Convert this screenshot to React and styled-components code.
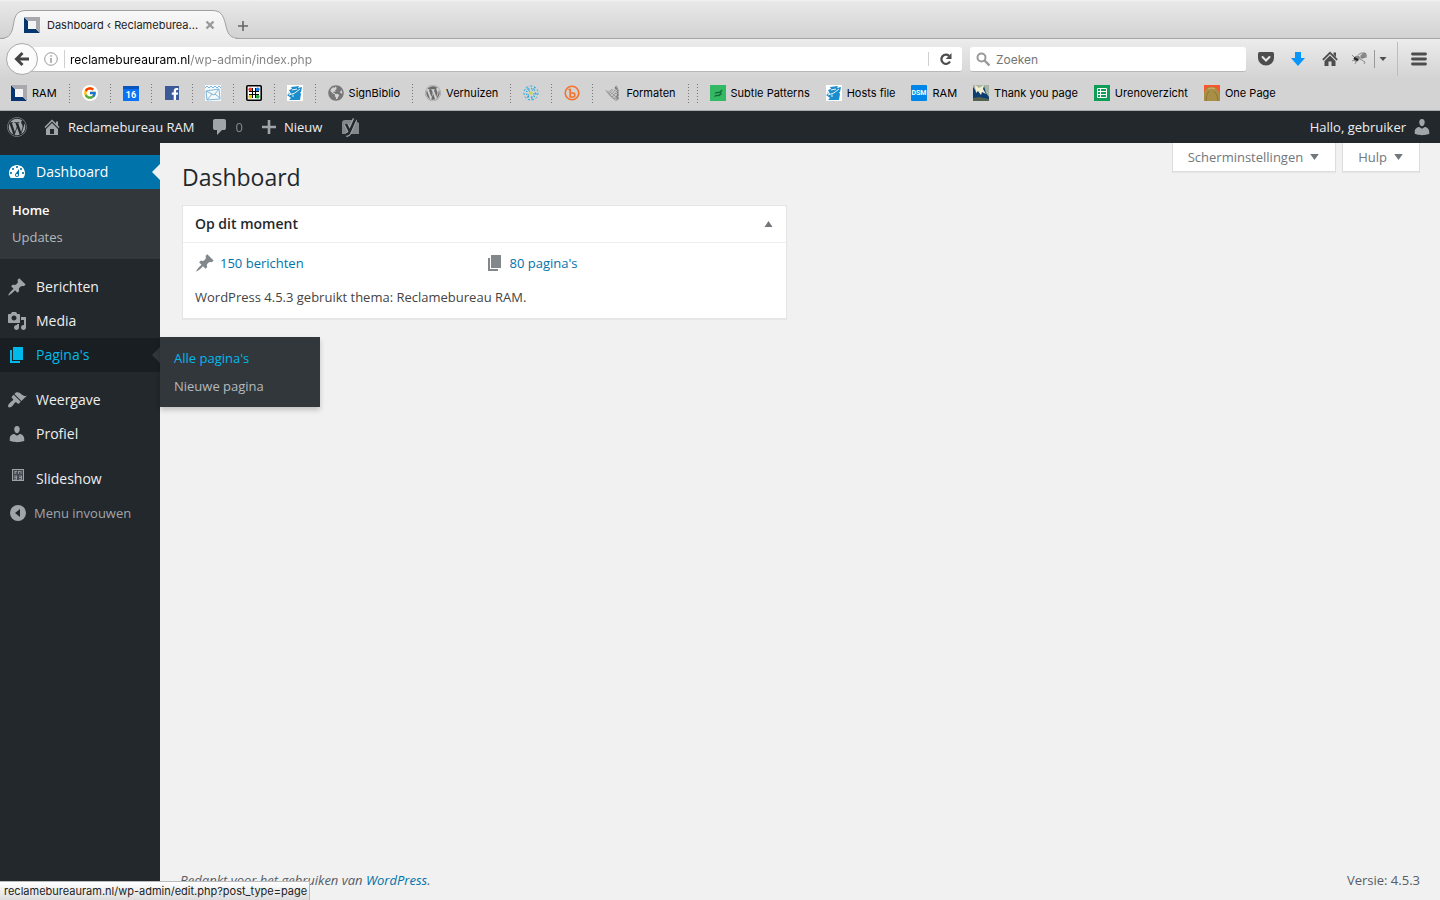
import React from "react";
import styled, { createGlobalStyle, css } from "styled-components";
import { FaFacebookF, FaGlobeAmericas, FaWordpress } from "react-icons/fa";
import { FcGoogle } from "react-icons/fc";

const GlobalStyle = createGlobalStyle`
  *, *::before, *::after {
    box-sizing: border-box;
  }

  body {
    margin: 0;
    background: #f1f1f1;
    font-family: "Open Sans", sans-serif;
    font-size: 13px;
    color: #444;
  }

  a {
    text-decoration: none;
  }

  button, input {
    font: inherit;
    color: inherit;
    border: 0;
    padding: 0;
    margin: 0;
    background: none;
  }

  ul {
    list-style: none;
    margin: 0;
    padding: 0;
  }

  svg {
    display: block;
    flex: none;
  }
`;

const Page = styled.div`
  min-height: 100vh;
  display: flex;
  flex-direction: column;
`;

/* ---------- icons ---------- */

const DASHICONS = {
  dashboard:
    "M3.76 16h12.48c1.1-1.37 1.76-3.11 1.76-5 0-4.42-3.58-8-8-8s-8 3.58-8 8c0 1.89.66 3.63 1.76 5zM10 4c.55 0 1 .45 1 1s-.45 1-1 1-1-.45-1-1 .45-1 1-1zM6 6c.55 0 1 .45 1 1s-.45 1-1 1-1-.45-1-1 .45-1 1-1zm8 0c.55 0 1 .45 1 1s-.45 1-1 1-1-.45-1-1 .45-1 1-1zm-5.37 5.55L12 7v6c0 1.1-.9 2-2 2s-2-.9-2-2c0-.57.24-1.08.63-1.45zM4 10c.55 0 1 .45 1 1s-.45 1-1 1-1-.45-1-1 .45-1 1-1zm12 0c.55 0 1 .45 1 1s-.45 1-1 1-1-.45-1-1 .45-1 1-1zm-5 3c0-.55-.45-1-1-1s-1 .45-1 1 .45 1 1 1 1-.45 1-1z",
  post:
    "M10.44 3.02l1.82-1.82 6.36 6.35-1.83 1.82c-1.05-.68-2.48-.57-3.41.36l-.75.75c-.92.93-1.04 2.35-.35 3.41l-1.83 1.82-2.41-2.41-2.8 2.79c-.42.42-3.38 2.71-3.8 2.29s1.86-3.39 2.28-3.81l2.79-2.79L4.1 9.36l1.83-1.82c1.05.69 2.48.57 3.4-.36l.75-.75c.93-.92 1.05-2.35.36-3.41z",
  media:
    "M13 11V4c0-.55-.45-1-1-1h-1.67L9 1H5L3.67 3H2c-.55 0-1 .45-1 1v7c0 .55.45 1 1 1h10c.55 0 1-.45 1-1zM7 4.5c1.38 0 2.5 1.12 2.5 2.5S8.38 9.5 7 9.5 4.5 8.38 4.5 7 5.62 4.5 7 4.5zM14 6h5v10.5c0 1.38-1.12 2.5-2.5 2.5S14 17.88 14 16.5s1.12-2.5 2.5-2.5c.17 0 .34.02.5.05V9h-3V6zm-4 8.05V13h2v3.5c0 1.38-1.12 2.5-2.5 2.5S7 17.88 7 16.5 8.12 14 9.5 14c.17 0 .34.02.5.05z",
  page: "M6 15V2h10v13H6zm-1 1h8v2H3V5h2v11z",
  appearance:
    "M14.48 11.06L7.41 3.99l1.5-1.5c.5-.56 2.3-.47 3.51.32 1.21.8 1.43 1.28 2.91 2.1 1.18.64 2.45 1.26 4.45.85zm-.71.71L6.7 4.7 4.93 6.47c-.39.39-.39 1.02 0 1.41l1.06 1.06c.39.39.39 1.03 0 1.42-.6.6-1.43 1.11-2.21 1.69-.35.26-.7.53-1.01.84C1.43 14.23.4 16.08 1.4 17.07c.99 1 2.84-.03 4.18-1.36.31-.31.58-.66.85-1.02.57-.78 1.08-1.61 1.69-2.21.39-.39 1.02-.39 1.41 0l1.06 1.06c.39.39 1.02.39 1.41 0z",
  users:
    "M10 9.25c-2.27 0-2.73-3.44-2.73-3.44C7 4.02 7.82 2 9.97 2c2.16 0 2.98 2.02 2.71 3.81 0 0-.41 3.44-2.68 3.44zm0 2.57L12.72 10c2.39 0 4.52 2.33 4.52 4.53v2.49s-3.65 1.13-7.24 1.13c-3.65 0-7.24-1.13-7.24-1.13v-2.49c0-2.25 1.94-4.48 4.47-4.48z",
  home:
    "M16 8.5l1.53 1.53-1.06 1.06L10 4.6l-6.47 6.49-1.06-1.06L10 2.5l4 4v-2h2v4zm-6-2.46l6 5.99V18H4v-5.97zM12 17v-5H8v5h4z",
  comments:
    "M5 2h9q.82 0 1.41.59T16 4v7q0 .82-.59 1.41T14 13h-2l-5 5v-5H5q-.82 0-1.41-.59T3 11V4q0-.82.59-1.41T5 2z",
  plus: "M17 8.7v2.6h-5.700v5.700H8.700v-5.700H3V8.700h5.700V3h2.600v5.700z",
  collapse: "M10 2a8 8 0 1 0 0 16a8 8 0 0 0 0-16zM12 6v8l-5-4z",
};

const Dashicon = ({ name }) => (
  <svg width="20" height="20" viewBox="0 0 20 20" fill="currentColor" aria-hidden="true">
    <path d={DASHICONS[name]} fillRule={name === "collapse" ? "evenodd" : "nonzero"} />
  </svg>
);

const Glyph = ({ size = 16, children }) => (
  <svg width={size} height={size} viewBox={`0 0 ${size} ${size}`} fill="none" aria-hidden="true">
    {children}
  </svg>
);

const Triangle = ({ up }) => (
  <svg width="9" height="6" viewBox="0 0 9 6" fill="currentColor" aria-hidden="true">
    <path d={up ? "M4.500 0L8.500 6H.5z" : "M.2 0h8.600L4.500 6z"} />
  </svg>
);

const SlideshowIcon = () => (
  <Glyph size={12}>
    <rect x=".5" y=".5" width="11" height="11" fill="#444950" stroke="#9ea3a8" />
    <path
      d="M3 2v3M3 2.500h2M3 4h1.500M6.500 2v3M9 2v3M6.500 2.500h2M2 7h3M2 8.500h3M2 10.300h3M4.500 7v3.500M7 7h3M7 8.500h3M7 10.300h3M9.500 7v3.500"
      stroke="#9ea3a8"
      strokeWidth=".8"
    />
  </Glyph>
);

const YoastIcon = () => (
  <Glyph size={20}>
    <path d="M5 3h9l5 3v11H2V6q0-3 3-3z" fill="#82878c" />
    <path d="M6 7l3.500 7M15 2l-5.500 13Q8.500 17.500 6 17.500" stroke="#a0a5aa" strokeWidth="4.600" />
    <path d="M6 7l3.500 7M15.500 1.500l-6 13.500Q8.500 17.500 6 17.500" stroke="#23282d" strokeWidth="2.400" />
  </Glyph>
);

const RamIcon = () => (
  <Glyph>
    <path d="M0 0h16v16H0z" fill="#fff" />
    <path d="M0 0l4 4v8h8l4 4H0z" fill="#06366f" />
    <path d="M0 0h16v16l-4-4V4H4z" fill="#a7a9ae" />
    <path d="M4 4h8v8H4z" fill="#f4f4f4" />
  </Glyph>
);

const GoogleIcon = () => (
  <Glyph>
    <circle cx="8" cy="8" r="8" fill="#fff" />
    <FcGoogle x="1" y="1" size={14} />
  </Glyph>
);

const CalendarIcon = () => (
  <Glyph>
    <path d="M0 1h16v15H0z" fill="#0a72f4" />
    <path d="M0 1h16v3H0z" fill="#0a55bd" />
    <text x="8" y="13" textAnchor="middle" fontFamily="Roboto, sans-serif" fontSize="9" fontWeight="700" fill="#fff">
      16
    </text>
  </Glyph>
);

const FacebookIcon = () => (
  <Glyph>
    <path d="M1 1h14v14H1z" fill="#3b5998" />
    <FaFacebookF x="5" y="3" size={12} color="#fff" />
  </Glyph>
);

const MailIcon = () => (
  <Glyph>
    <path d="M0 0h16v16H0z" fill="#f3f8fb" />
    <path d="M1 6l13-2 1 10-13 1zM1 6l8 4 5-6M2 15l5-6M15 13l-5-4" stroke="#7db6d9" />
    <path d="M0 3l2-2 2 2 2-2 2 2 2-2 2 2 2-2 2 2" stroke="#7db6d9" />
  </Glyph>
);

const GridIcon = () => (
  <Glyph>
    <rect x=".8" y=".8" width="14.400" height="14.400" rx="1" fill="#fff" stroke="#000" strokeWidth="1.600" />
    <path d="M6.500 3v10M9.500 3v10M3 6.500h10M3 9.500h10" stroke="#000" />
    <circle cx="4.300" cy="4.300" r="1.900" fill="#ef3e23" />
    <circle cx="11.700" cy="4.300" r="1.900" fill="#1676e8" />
    <circle cx="4.300" cy="11.700" r="1.900" fill="#e8cc12" />
    <circle cx="11.700" cy="11.700" r="1.900" fill="#18b23b" />
  </Glyph>
);

const HostsIcon = () => (
  <Glyph>
    <path d="M0 0h16v16H0z" fill="#fff" />
    <path d="M4 2l8-1-1 2 4-1-1 5-10 2-2-4 3-1zM1 7l2 2 10-2 1 2-1 6H2l2-2-4-3 2-1z" fill="#1c8dcc" />
    <path d="M2 10q6-1 11-6M6 9.500V12M5 5l5-1" stroke="#fff" strokeWidth=".9" />
  </Glyph>
);

const SparkIcon = () => (
  <Glyph>
    <circle cx="8" cy="8" r="7" stroke="#21a5dc" strokeDasharray="2 2" />
    <circle cx="8" cy="8" r="4.500" stroke="#21a5dc" strokeDasharray="1 2" strokeWidth="1.500" />
    <path d="M3 2l4 5M12 2l-3 4M14 9h-4M4 13l2-4M9 15v-4" stroke="#21a5dc" strokeWidth=".8" />
    <circle cx="8" cy="8" r="1.500" fill="#c9d92c" />
  </Glyph>
);

const BitlyIcon = () => (
  <Glyph>
    <circle cx="8" cy="8" r="6.800" stroke="#f3722c" strokeWidth="1.600" />
    <path d="M4.500 4.500h1.700v8M6.200 8h3.300a1.200 1.200 0 0 1 1.200 1.200v1.600A1.200 1.200 0 0 1 9.500 12H6.200" stroke="#f3722c" strokeWidth="1.700" />
  </Glyph>
);

const ShellIcon = () => (
  <Glyph>
    <path d="M0 5l5 1 1-2 3 1 2-5 2 3 1 4v7l-3 2-4-3-3-3z" fill="#999" />
    <path d="M1 5l11 9M3 5l10 6M6 5l8 4M9 4l5 3M5 9l5-5M6 11l7-7M8 13l6-6M10 15l4-4" stroke="#d8d8d8" strokeWidth=".7" />
    <path d="M10 2l3 4-1 8" stroke="#666" strokeWidth=".8" />
  </Glyph>
);

const PatternsIcon = () => (
  <Glyph>
    <path d="M0 0h16v16H0z" fill="#33b864" />
    <path d="M5 8.500q2-1.500 3.500-1T12 5M4.500 11.500q2-1.500 3.500-1T11.500 8" stroke="#176b39" strokeWidth="1.400" />
  </Glyph>
);

const DsmIcon = () => (
  <Glyph>
    <rect width="16" height="16" rx="1" fill="#0086ea" />
    <text x="8" y="10" textAnchor="middle" fontFamily="Roboto, sans-serif" fontSize="7" fontWeight="700" fill="#fff">
      DSM
    </text>
  </Glyph>
);

const BirdIcon = () => (
  <Glyph>
    <path d="M0 0h16v16H0z" fill="#a9b6a3" />
    <path d="M0 2l3 4 2-2 3 3 3-6 2 7 3 4v4H0z" fill="#0c3d75" />
    <path d="M2 0l4 3 5-3-1 4 3 5-4-2-1 3-3-4-2 2z" fill="#f2efd0" />
    <path d="M0 13l6-1 10 2v2H0z" fill="#54604c" />
  </Glyph>
);

const SheetIcon = () => (
  <Glyph>
    <path d="M0 0h16v16H0z" fill="#0f9d58" />
    <path d="M3.500 3.500h9v9h-9zM3.500 6.500h9M3.500 9.500h9M6.500 3.500v9" stroke="#fff" />
  </Glyph>
);

const OnePageIcon = () => (
  <Glyph>
    <path d="M0 0h16v16H0z" fill="#f4582c" />
    <path d="M0 16V8q1-5 5-6 5-1 8 2 3 3 3 7v5z" fill="#a98f45" />
    <path d="M2 16q0-7 3-10M14 16q0-7-4-10" stroke="#8d7537" />
    <path d="M4 4q4-2 7 0" stroke="#cdb672" />
  </Glyph>
);

/* ---------- browser window ---------- */

const Browser = styled.header`
  font-family: Inter, "Liberation Sans", sans-serif;
  color: #000;
  border-bottom: 1px solid #aaa;
  background: #d3d3d3;
`;

const TabStrip = styled.div`
  height: 39px;
  display: flex;
  background: linear-gradient(#f2f2f2, #e8e8e8 2px, #d2d2d2);
  border-bottom: 1px solid #a6a6a6;
`;

const Tab = styled.div`
  position: relative;
  width: 234px;
  height: 39px;
  padding: 11px 19px 0 24px;
  display: flex;
  align-items: center;
  gap: 7px;
  font-size: 11px;
  color: #222;

  > * {
    position: relative;
  }

  > .shape {
    position: absolute;
    left: 0;
    top: 0;
  }

  .title {
    flex: 1;
    padding-bottom: 1px;
    overflow: hidden;
    white-space: nowrap;
    text-align: left;
  }
`;

const PlainButton = styled.button`
  width: ${(props) => props.$width || 32}px;
  height: 28px;
  display: flex;
  align-items: center;
  justify-content: center;
  flex: none;
  color: #4d4d4d;
`;

const NewTab = styled(PlainButton)`
  margin-top: 12px;
  color: #666;
`;

const NavBar = styled.div`
  height: 40px;
  display: flex;
  align-items: center;
  padding-left: 6px;
  background: linear-gradient(#ececec, #d3d3d3);
`;

const BackButton = styled.button`
  position: relative;
  width: 32px;
  height: 32px;
  flex: none;
  display: flex;
  align-items: center;
  justify-content: center;
  border: 1px solid #a9a9a9;
  border-radius: 50%;
  background: #fbfbfb;
  color: #444;
`;

const field = css`
  height: 25px;
  display: flex;
  align-items: center;
  background: #fff;
  border-radius: 3px;
  border-bottom: 1px solid #b8b8b8;
  font-size: 12px;

  input {
    flex: 1;
    min-width: 0;
    height: 24px;
    padding-top: 1px;
    outline: none;
  }
`;

const UrlField = styled.div`
  ${field}
  flex: 1;
  margin-left: -8px;
  padding-left: 14px;

  /* host part is black, the path is grey */
  input {
    margin-left: 5px;
    color: transparent;
    background: linear-gradient(to right, #000 120px, #808080 120px);
    background-clip: text;
  }
`;

const SearchField = styled.div`
  ${field}
  flex: 0 0 276px;
  margin: 0 4px 0 8px;
  padding-left: 6px;
  gap: 6px;
  color: #8c8c8c;

  input::placeholder {
    color: #757575;
    opacity: 1;
  }
`;

const Rule = styled.span`
  width: 1px;
  height: ${(props) => props.$height}px;
  margin-left: ${(props) => (props.$spaced ? 6 : 0)}px;
  background: ${(props) => props.$color || "#d0d0d0"};
  flex: none;
`;

const BookmarkBar = styled.nav`
  height: 31px;
  display: flex;
  align-items: center;
  padding: 0 11px 3px;
  font-size: 11px;
`;

const Bookmark = styled.a`
  display: flex;
  align-items: center;
  gap: 5px;
  flex: none;
  color: #000;
  white-space: nowrap;
  margin-right: ${(props) => (props.$divided ? 12 : 16)}px;
`;

const DottedRule = styled.span`
  width: 1px;
  height: 19px;
  flex: none;
  background: repeating-linear-gradient(#777 0 1px, transparent 1px 3px);
  margin-right: ${(props) => (props.$tight ? 8 : 12)}px;
`;

const bookmarks = [
  { title: "RAM", label: "RAM", icon: <RamIcon />, divided: true },
  { title: "Google", icon: <GoogleIcon />, divided: true },
  { title: "Agenda", icon: <CalendarIcon />, divided: true },
  { title: "Facebook", icon: <FacebookIcon />, divided: true },
  { title: "Mail", icon: <MailIcon />, divided: true },
  { title: "Raster", icon: <GridIcon />, divided: true },
  { title: "Hosting", icon: <HostsIcon />, divided: true },
  { title: "SignBiblio", label: "SignBiblio", icon: <FaGlobeAmericas size={16} color="#777" />, divided: true },
  { title: "Verhuizen", label: "Verhuizen", icon: <FaWordpress size={16} color="#6b6b6b" />, divided: true },
  { title: "Netwerk", icon: <SparkIcon />, divided: true },
  { title: "Bitly", icon: <BitlyIcon />, divided: true },
  { title: "Formaten", label: "Formaten", icon: <ShellIcon />, divided: true, double: true },
  { title: "Subtle Patterns", label: "Subtle Patterns", icon: <PatternsIcon /> },
  { title: "Hosts file", label: "Hosts file", icon: <HostsIcon /> },
  { title: "RAM", label: "RAM", icon: <DsmIcon /> },
  { title: "Thank you page", label: "Thank you page", icon: <BirdIcon /> },
  { title: "Urenoverzicht", label: "Urenoverzicht", icon: <SheetIcon /> },
  { title: "One Page", label: "One Page", icon: <OnePageIcon /> },
];

function BrowserWindow() {
  return (
    <Browser>
      <TabStrip>
        <Tab>
          <svg className="shape" width="240" height="39" viewBox="0 0 240 39" aria-hidden="true">
            <defs>
              <linearGradient id="tabFill" x2="0" y2="1">
                <stop offset="0" stopColor="#f8f8f8" />
                <stop offset="1" stopColor="#ececec" />
              </linearGradient>
            </defs>
            <path
              d="M0 38.500C10 38.500 12 33 13.500 24C15 14 18 10.500 27 10.500H212C220 10.500 223 14 225.500 24C227.500 33 229 38.500 240 38.500"
              fill="url(#tabFill)"
              stroke="#a0a0a0"
            />
            <path d="M5 38.500H235" stroke="#ececec" />
          </svg>
          <RamIcon />
          <span className="title">Dashboard ‹ Reclameburea...</span>
          <PlainButton $width={10} aria-label="Tabblad sluiten">
            <Glyph size={10}>
              <path d="M1.500 1.500l7 7M8.500 1.500l-7 7" stroke="#999" strokeWidth="2.400" />
            </Glyph>
          </PlainButton>
        </Tab>
        <NewTab $width={18} aria-label="Nieuw tabblad">
          <Glyph size={12}>
            <path d="M6 1v10M1 6h10" stroke="currentColor" strokeWidth="1.600" />
          </Glyph>
        </NewTab>
      </TabStrip>

      <NavBar>
        <BackButton aria-label="Terug">
          <Glyph size={16}>
            <path d="M8.500 2L2.500 8l6 6M3 8h12" stroke="currentColor" strokeWidth="3" />
          </Glyph>
        </BackButton>
        <UrlField>
          <PlainButton $width={14} aria-label="Site-informatie">
            <Glyph size={14}>
              <circle cx="7" cy="7" r="6.300" stroke="#999" />
              <path d="M7 3.200v1.600M7 6v4.800" stroke="#999" strokeWidth="1.500" />
            </Glyph>
          </PlainButton>
          <Rule $height={18} $spaced />
          <input aria-label="Adres" defaultValue="reclamebureauram.nl/wp-admin/index.php" />
          <Rule $height={14} />
          <PlainButton $width={33} aria-label="Vernieuwen">
            <Glyph size={14}>
              <path d="M11 9.500A4.600 4.600 0 1 1 10 3.800" stroke="currentColor" strokeWidth="2.200" />
              <path d="M12.500 1v6H6.700z" fill="currentColor" />
            </Glyph>
          </PlainButton>
        </UrlField>
        <SearchField>
          <Glyph size={14}>
            <circle cx="5.500" cy="5.500" r="4" stroke="#999" strokeWidth="2" />
            <path d="M8.500 8.500l5 5" stroke="#999" strokeWidth="2.400" />
          </Glyph>
          <input aria-label="Zoeken" placeholder="Zoeken" />
        </SearchField>
        <PlainButton aria-label="Pocket">
          <Glyph>
            <path d="M1.500 1h13Q16 1 16 2.500V7a8 7.500 0 0 1-16 0V2.500Q0 1 1.500 1z" fill="currentColor" />
            <path d="M4.500 6L8 9.500 11.500 6" stroke="#e8e8e8" strokeWidth="2" strokeLinecap="round" />
          </Glyph>
        </PlainButton>
        <PlainButton aria-label="Downloads">
          <Glyph>
            <path d="M5 1h6v6h4l-7 8-7-8h4z" fill="#0996f8" />
          </Glyph>
        </PlainButton>
        <PlainButton aria-label="Startpagina">
          <Glyph>
            <path d="M8 .5l7.800 7.800-1.300 1.200L8 3 1.500 9.500.2 8.300zM11.500 1.500H14v4.500l-2.500-2.500z" fill="currentColor" />
            <path d="M8 4.500L13.500 10v5H9.500v-4.500h-3V15h-4v-5z" fill="currentColor" />
          </Glyph>
        </PlainButton>
        <PlainButton $width={28} aria-label="Firebug">
          <Glyph>
            <path d="M2 6q4-3 6 0 0 4-4 5-3-1-2-5zM8 5q3-4 6-3l1 3-5 3z" fill="#888" />
            <path d="M0 4l3 3M0 10l4-2M3 13l2-4M8 8l5 3-1 2M6 4l3-2h4M8 7l7-1" stroke="#777" strokeWidth=".8" />
            <path d="M2 7l4 2" stroke="#222" strokeWidth="2" />
          </Glyph>
        </PlainButton>
        <Rule $height={18} $color="#999" />
        <PlainButton $width={16} aria-label="Meer">
          <Glyph size={8}>
            <path d="M.5 2h7L4 6z" fill="currentColor" />
          </Glyph>
        </PlainButton>
        <Rule $height={34} $color="#bdbdbd" $spaced />
        <PlainButton $width={42} aria-label="Menu">
          <Glyph>
            <path d="M1.500 3h13M1.500 8h13M1.500 13h13" stroke="currentColor" strokeWidth="2.800" strokeLinecap="round" />
          </Glyph>
        </PlainButton>
      </NavBar>

      <BookmarkBar aria-label="Bladwijzers">
        {bookmarks.map((item, index) => (
          <React.Fragment key={index}>
            <Bookmark href="#" $divided={item.divided} aria-label={item.title}>
              {item.icon}
              {item.label}
            </Bookmark>
            {item.divided && <DottedRule $tight={item.double} />}
            {item.double && <DottedRule />}
          </React.Fragment>
        ))}
      </BookmarkBar>
    </Browser>
  );
}

/* ---------- admin bar ---------- */

const AdminBar = styled.nav`
  height: 32px;
  display: flex;
  align-items: center;
  padding: 0 8px 0 7px;
  background: #23282d;
  color: #eee;
`;

const BarLink = styled.a`
  display: flex;
  align-items: center;
  gap: ${(props) => props.$gap || 6}px;
  margin-right: ${(props) => props.$after || 0}px;
  color: #eee;
  white-space: nowrap;

  svg {
    color: #a0a5aa;
  }

  .count {
    color: #9ca1a6;
    opacity: 0.8;
  }

  &.account {
    margin-left: auto;
  }
`;

/* ---------- sidebar ---------- */

const Body = styled.div`
  flex: 1;
  display: flex;
`;

const Sidebar = styled.nav`
  width: 160px;
  flex: none;
  padding-top: 12px;
  background: #23282d;
`;

const states = {
  current: css`
    background: #0073aa;
    color: #fff;
  `,
  open: css`
    background: #191e23;
    color: #00b9eb;
  `,
};

const MenuItem = styled.li`
  position: relative;
  margin-top: ${(props) => (props.$spaced ? 11 : 0)}px;
`;

const MenuLink = styled.a`
  height: 34px;
  display: flex;
  align-items: center;
  gap: 9px;
  padding: 0 0 2px 7px;
  font-size: 14px;
  color: #eee;

  svg {
    margin-top: 2px;
    color: #a0a5aa;
  }

  .small {
    width: 20px;
    padding: 0 0 8px 5px;
  }

  ${(props) => states[props.$state]}

  ${(props) =>
    props.$state &&
    css`
      svg {
        color: inherit;
      }
    `}
`;

const Arrow = styled.span`
  position: absolute;
  right: 0;
  top: 9px;
  border: 8px solid transparent;
  border-left-width: 0;
  border-right-color: ${(props) => props.$color};
`;

const SubMenu = styled.ul`
  padding: 8px 12px;
  background: #32373c;

  a {
    display: block;
    line-height: 27px;
    color: #b4b9be;
  }

  a.current {
    color: #fff;
    font-weight: 600;
  }
`;

const FlyOut = styled.ul`
  position: absolute;
  z-index: 1;
  left: 160px;
  top: -1px;
  width: 160px;
  padding: 7px 14px;
  background: #32373c;
  box-shadow: 0 3px 5px rgba(0, 0, 0, 0.2);

  a {
    display: block;
    line-height: 28px;
    color: #b4b9be;
  }

  a.hover {
    color: #00b9eb;
  }
`;

const Collapse = styled.button`
  height: 34px;
  display: flex;
  align-items: center;
  gap: 6px;
  padding-left: 8px;
  color: #a0a5aa;
`;

function AdminMenu() {
  return (
    <Sidebar aria-label="Hoofdmenu">
      <ul>
        <MenuItem>
          <MenuLink href="#" $state="current">
            <Dashicon name="dashboard" />
            Dashboard
            <Arrow $color="#f1f1f1" />
          </MenuLink>
          <SubMenu>
            <li>
              <a className="current" href="#">Home</a>
            </li>
            <li>
              <a href="#">Updates</a>
            </li>
          </SubMenu>
        </MenuItem>
        <MenuItem $spaced>
          <MenuLink href="#">
            <Dashicon name="post" />
            Berichten
          </MenuLink>
        </MenuItem>
        <MenuItem>
          <MenuLink href="#">
            <Dashicon name="media" />
            Media
          </MenuLink>
        </MenuItem>
        <MenuItem>
          <MenuLink href="#" $state="open">
            <Dashicon name="page" />
            Pagina's
            <Arrow $color="#32373c" />
          </MenuLink>
          <FlyOut>
            <li>
              <a className="hover" href="#">Alle pagina's</a>
            </li>
            <li>
              <a href="#">Nieuwe pagina</a>
            </li>
          </FlyOut>
        </MenuItem>
        <MenuItem $spaced>
          <MenuLink href="#">
            <Dashicon name="appearance" />
            Weergave
          </MenuLink>
        </MenuItem>
        <MenuItem>
          <MenuLink href="#">
            <Dashicon name="users" />
            Profiel
          </MenuLink>
        </MenuItem>
        <MenuItem $spaced>
          <MenuLink href="#">
            <span className="small">
              <SlideshowIcon />
            </span>
            Slideshow
          </MenuLink>
        </MenuItem>
        <li>
          <Collapse>
            <Dashicon name="collapse" />
            Menu invouwen
          </Collapse>
        </li>
      </ul>
    </Sidebar>
  );
}

/* ---------- dashboard ---------- */

const Main = styled.main`
  flex: 1;
  display: flex;
  flex-direction: column;
  padding: 0 20px 0 22px;
`;

const Top = styled.div`
  display: flex;
  justify-content: space-between;
  align-items: flex-start;
`;

const Title = styled.h1`
  margin: 18px 0 12px;
  font-size: 23px;
  font-weight: 400;
  line-height: 32px;
  color: #23282d;
`;

const ScreenTabs = styled.div`
  display: flex;
  gap: 6px;
`;

const ScreenTab = styled.button`
  height: 29px;
  display: flex;
  align-items: center;
  gap: 7px;
  padding: 0 16px 0 15px;
  background: #fff;
  border: 1px solid #ddd;
  border-top: 0;
  box-shadow: 0 1px 1px rgba(0, 0, 0, 0.04);
  color: #72777c;
`;

const Columns = styled.div`
  display: grid;
  grid-template-columns: 1fr 1fr;
  gap: 28px;
`;

const Widget = styled.section`
  background: #fff;
  border: 1px solid #e5e5e5;
  box-shadow: 0 1px 1px rgba(0, 0, 0, 0.04);
`;

const WidgetHead = styled.div`
  height: 37px;
  display: flex;
  align-items: center;
  justify-content: space-between;
  padding: 0 2px 1px 12px;
  border-bottom: 1px solid #eee;
  color: #72777c;

  h2 {
    margin: 0;
    font-size: 14px;
    font-weight: 600;
    color: #23282d;
  }

  button {
    color: inherit;
  }
`;

const WidgetBody = styled.div`
  padding: 10px 12px 11px;

  p {
    margin: 15px 0 0;
    line-height: 19px;
  }
`;

const Stats = styled.ul`
  display: grid;
  grid-template-columns: 1fr 1fr;

  li {
    display: flex;
    align-items: center;
    gap: 5px;
    color: #82878c;
  }

  a {
    color: #0073aa;
  }
`;

const Footer = styled.footer`
  margin-top: auto;
  padding-bottom: 10px;
  display: flex;
  justify-content: space-between;
  line-height: 19px;
  color: #555d66;

  em {
    margin-left: -2px;
  }

  a {
    color: #0073aa;
  }
`;

const StatusBar = styled.div`
  position: fixed;
  z-index: 2;
  left: 0;
  bottom: 0;
  height: 19px;
  padding: 0 2px 0 4px;
  line-height: 18px;
  font-family: Inter, "Liberation Sans", sans-serif;
  font-size: 11px;
  color: #222;
  background: linear-gradient(#fff, #ddd);
  border: 1px solid #bbb;
  border-width: 1px 1px 0 0;
`;

export default function App() {
  return (
    <Page>
      <GlobalStyle />
      <BrowserWindow />
      <AdminBar aria-label="Toolbar">
        <BarLink href="#" $after={15} aria-label="Over WordPress">
          <FaWordpress size={20} />
        </BarLink>
        <BarLink href="#" $after={16}>
          <Dashicon name="home" />
          Reclamebureau RAM
        </BarLink>
        <BarLink href="#" $gap={5} $after={16} aria-label="Reacties">
          <Dashicon name="comments" />
          <span className="count">0</span>
        </BarLink>
        <BarLink href="#" $gap={5} $after={18}>
          <Dashicon name="plus" />
          Nieuw
        </BarLink>
        <BarLink href="#" aria-label="Yoast SEO">
          <YoastIcon />
        </BarLink>
        <BarLink href="#" className="account">
          Hallo, gebruiker
          <Dashicon name="users" />
        </BarLink>
      </AdminBar>
      <Body>
        <AdminMenu />
        <Main>
          <Top>
            <Title>Dashboard</Title>
            <ScreenTabs>
              <ScreenTab>
                Scherminstellingen
                <Triangle />
              </ScreenTab>
              <ScreenTab>
                Hulp
                <Triangle />
              </ScreenTab>
            </ScreenTabs>
          </Top>
          <Columns>
            <Widget>
              <WidgetHead>
                <h2>Op dit moment</h2>
                <PlainButton aria-label="Paneel in- of uitklappen">
                  <Triangle up />
                </PlainButton>
              </WidgetHead>
              <WidgetBody>
                <Stats>
                  <li>
                    <Dashicon name="post" />
                    <a href="#">150 berichten</a>
                  </li>
                  <li>
                    <Dashicon name="page" />
                    <a href="#">80 pagina's</a>
                  </li>
                </Stats>
                <p>WordPress 4.5.3 gebruikt thema: Reclamebureau RAM.</p>
              </WidgetBody>
            </Widget>
          </Columns>
          <Footer>
            <em>
              Bedankt voor het gebruiken van <a href="#">WordPress</a>.
            </em>
            <span>Versie: 4.5.3</span>
          </Footer>
        </Main>
      </Body>
      <StatusBar>reclamebureauram.nl/wp-admin/edit.php?post_type=page</StatusBar>
    </Page>
  );
}
